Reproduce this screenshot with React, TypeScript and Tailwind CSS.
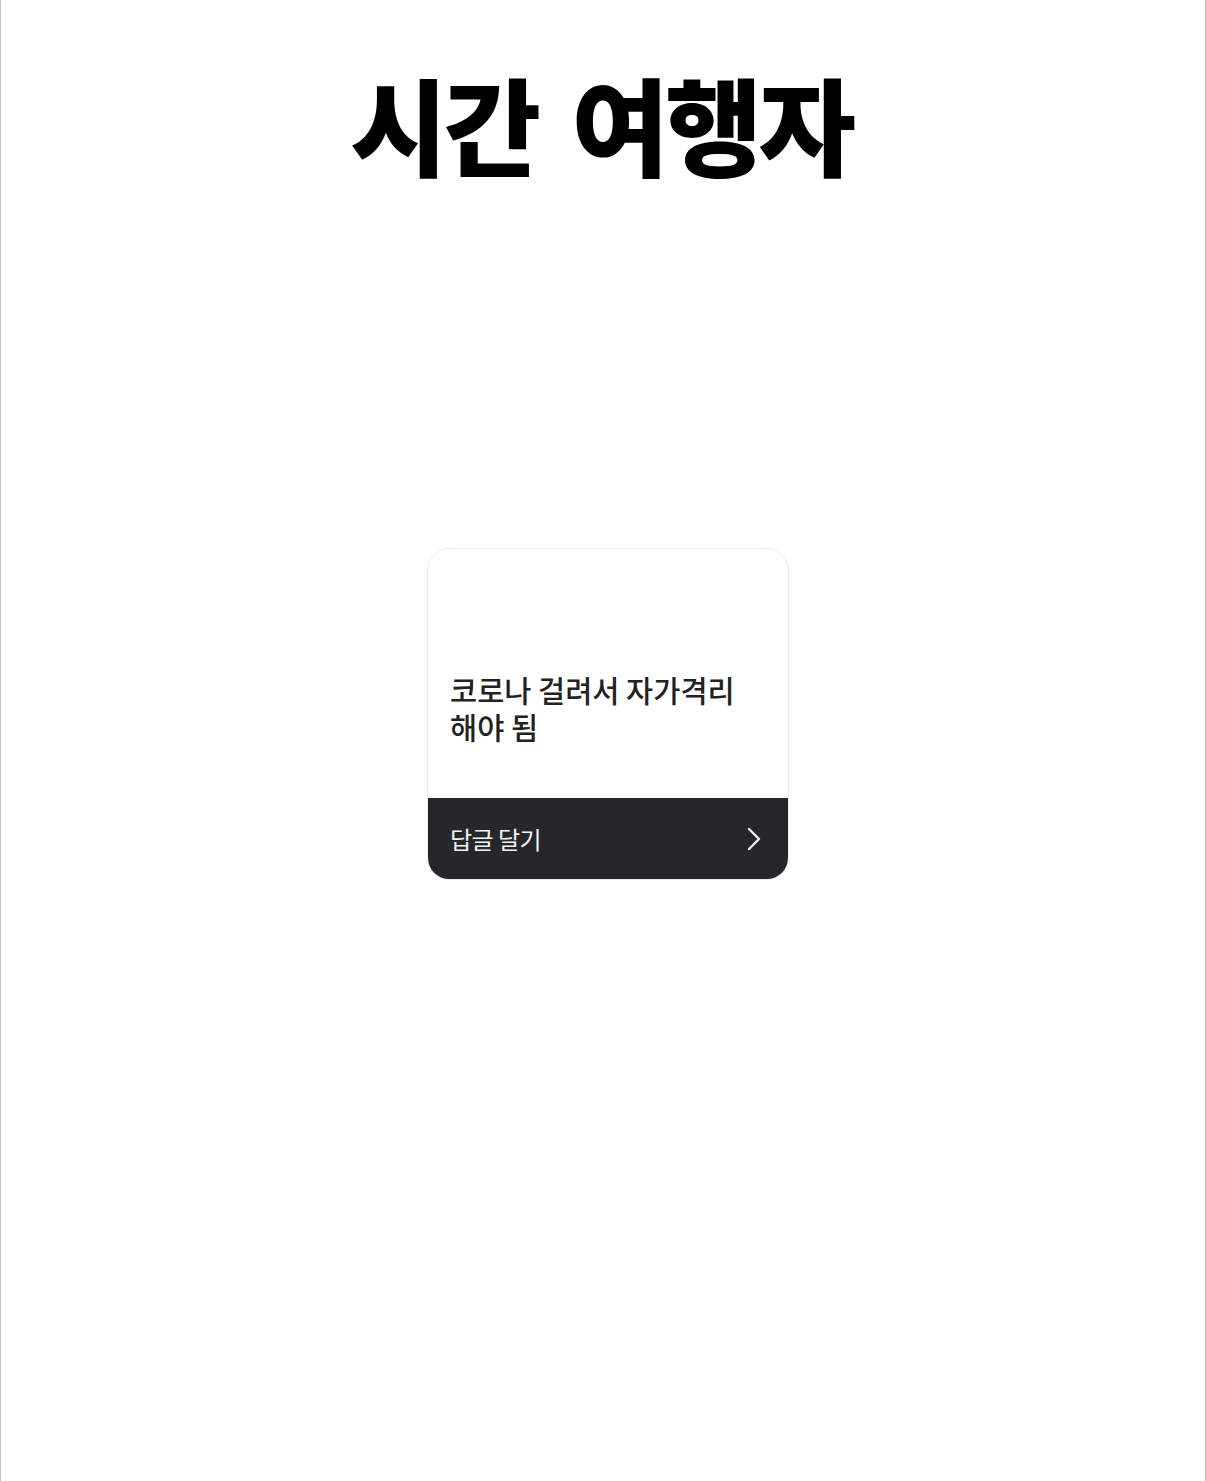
import React from "react";

const font = { fontFamily: '"Noto Sans CJK KR", "Noto Sans", sans-serif' };

export default function App() {
  return (
    <div
      className="w-[1206px] h-[1481px] bg-white border-x border-[#c4c4c4] flex flex-col items-center"
      style={font}
    >
      {/* Title */}
      <h1 className="mt-[52px] -ml-[4px] text-[106px] leading-[140px] font-black tracking-[-4px] [word-spacing:14px] text-black">
        시간 여행자
      </h1>

      {/* Question card */}
      <div className="mt-[356px] ml-[10px] w-[362px] h-[332px] rounded-[22px] border border-[#ececec] bg-white overflow-hidden flex flex-col">
        <div className="flex-1 flex flex-col justify-center px-[22px] pt-[68px]">
          <p className="text-[29.5px] leading-[37px] font-medium text-[#222222]">
            <span className="block">코로나 걸려서 자가격리</span>
            <span className="block">해야 됨</span>
          </p>
        </div>
        <div className="h-[81px] bg-[#26272b] flex items-center justify-between pl-[22px] pr-[26px]">
          <span className="text-[24px] text-[#f2f2f2] tracking-[-0.5px]">답글 달기</span>
          <svg width="16" height="26" viewBox="0 0 16 26" fill="none">
            <path d="M3 3L13 13L3 23" stroke="#f2f2f2" strokeWidth="2.4" strokeLinecap="round" strokeLinejoin="round" />
          </svg>
        </div>
      </div>
    </div>
  );
}
